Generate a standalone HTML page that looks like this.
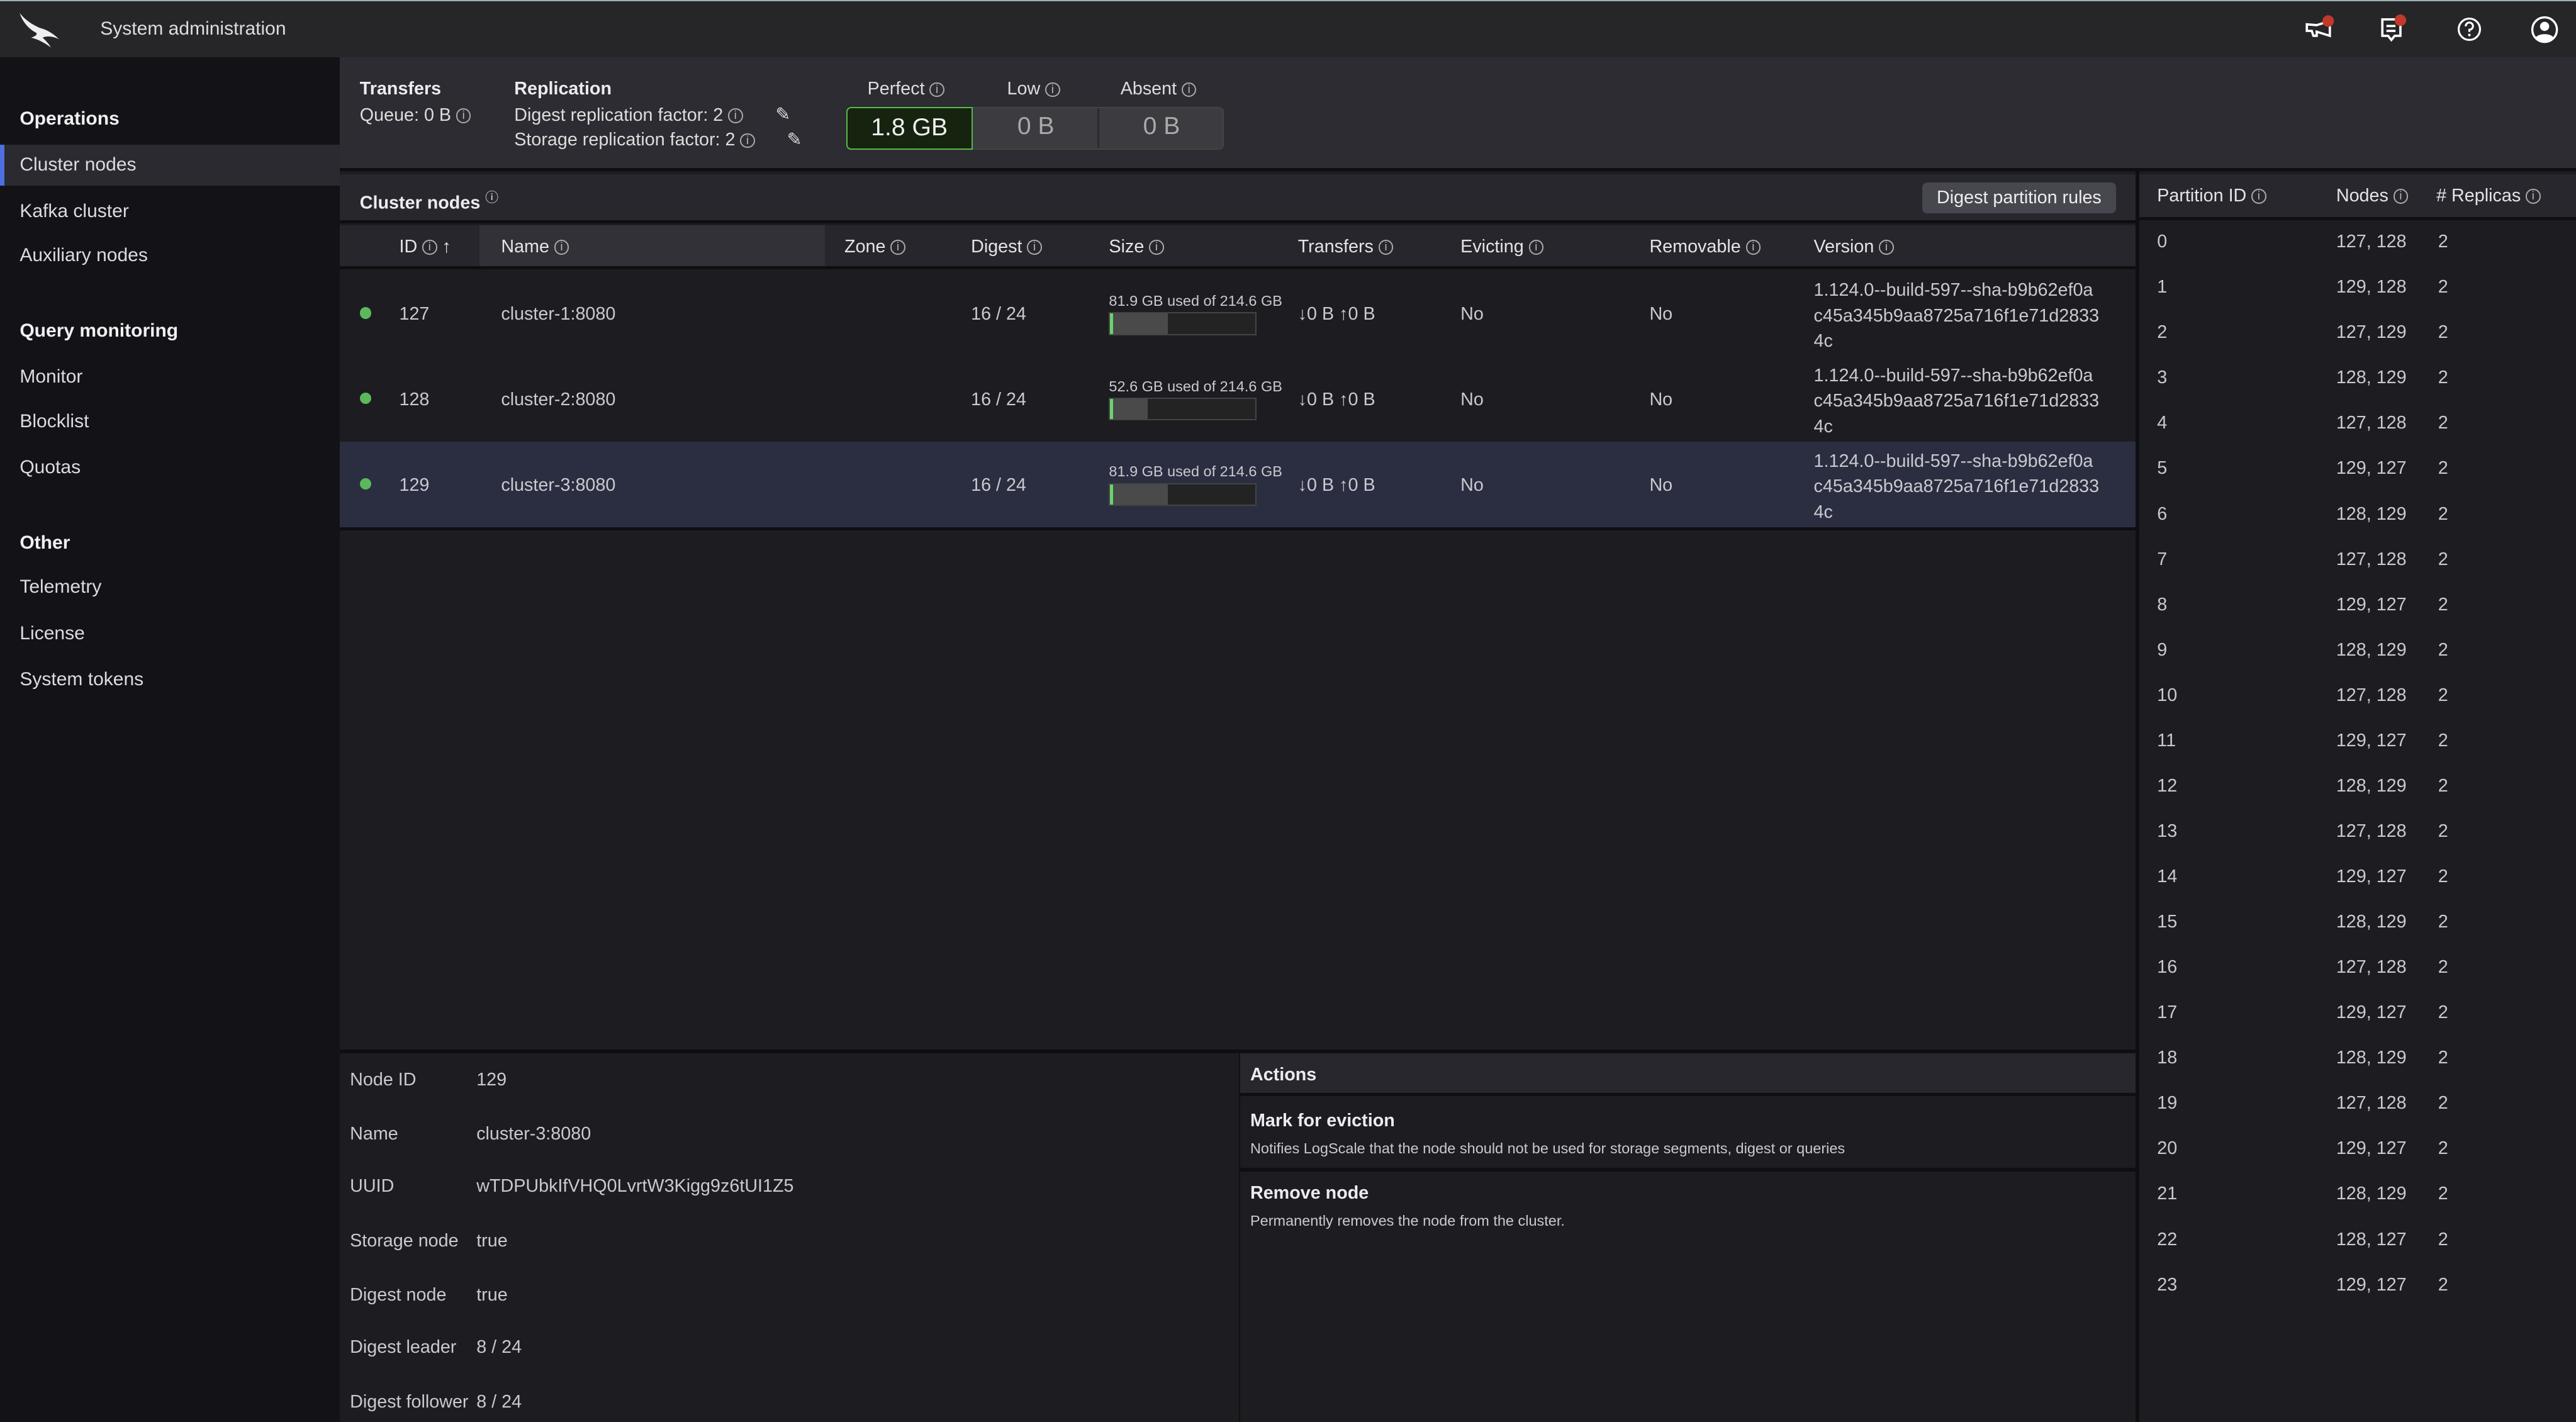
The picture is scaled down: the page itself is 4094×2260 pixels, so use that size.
<!DOCTYPE html>
<html><head><meta charset="utf-8"><style>
*{margin:0;padding:0;box-sizing:border-box}
html,body{width:4094px;height:2260px;overflow:hidden;background:#1c1c21}
#r{zoom:2.611;width:1568px;height:866px;position:relative;font-family:"Liberation Sans",sans-serif;color:#c9c9cf;font-size:11px;overflow:hidden;background:#1c1c21}
.a{position:absolute;white-space:nowrap}
.b{font-weight:bold;color:#ececf0}
.i{display:inline-block;width:9px;height:9px;border:1px solid #aaa;border-radius:50%;font-size:7px;line-height:7px;text-align:center;vertical-align:1px;margin-left:3px;color:#bbb;font-weight:normal}
.sb div{position:absolute;left:12px;font-size:11.5px;color:#dcdce0}
.sb .h{font-weight:bold;color:#f0f0f3}
.dot{position:absolute;width:7px;height:7px;border-radius:50%;background:#5cb85c;left:219px}
.bar{position:absolute;left:675px;width:90px;height:14px;background:#232323;border:1px solid #444}
.bar i{position:absolute;left:0;top:0;bottom:0;background:#4a4a4a;border-left:2px solid #6bd36b}
.pt div{position:absolute;font-size:11px;color:#c9c9cf}
</style></head><body><div id="r">
<div class="a" style="left:0;top:0;width:1568px;height:35px;background:#262628;border-top:1px solid #9ab0b4"></div>
<svg class="a" style="left:10px;top:7px" width="28" height="22" viewBox="0 0 28 22"><path d="M2 1 C6 6 10 8 14 10 C18 11 22 13 26 17 C22 15 18 15 16 16 C18 18 20 20 21 22 C17 19 13 17 9 16 C12 15 13 14 12 13 C8 11 4 7 2 1Z" fill="#eee"/></svg>
<div class="a" style="left:61px;top:11px;font-size:11.5px;color:#ddd">System administration</div>
<svg class="a" style="left:1402px;top:9px" width="22" height="18" viewBox="0 0 22 18"><path d="M2 6 L2 10 L5 10 L6 13 L8 13 L8 10.5 L16 13 L16 4 L8 6.5 Z" fill="none" stroke="#fff" stroke-width="1.4"/><circle cx="15" cy="4" r="3.5" fill="#c0392b"/></svg>
<svg class="a" style="left:1448px;top:9px" width="22" height="20" viewBox="0 0 22 20"><path d="M2 3 H13 V13 H9.5 L7.5 15.5 L5.5 13 H2 Z M4.5 7 H10 M4.5 10 H10" fill="none" stroke="#fff" stroke-width="1.4"/><circle cx="13" cy="3.5" r="3.5" fill="#c0392b"/></svg>
<svg class="a" style="left:1494px;top:9px" width="18" height="18" viewBox="0 0 18 18"><circle cx="9" cy="9" r="6.5" fill="none" stroke="#fff" stroke-width="1.2"/><path d="M6.8 7.2 A2.2 2.2 0 1 1 9 9.3 V10.6" fill="none" stroke="#fff" stroke-width="1.2"/><circle cx="9" cy="12.5" r=".8" fill="#fff"/></svg>
<svg class="a" style="left:1539px;top:8px" width="20" height="20" viewBox="0 0 20 20"><circle cx="10" cy="10" r="7.5" fill="none" stroke="#fff" stroke-width="1.3"/><circle cx="10" cy="8" r="2.8" fill="#fff"/><path d="M4.5 15 C6 12 14 12 15.5 15 C13 18 7 18 4.5 15Z" fill="#fff"/></svg>
<div class="a sb" style="left:0;top:35px;width:207px;height:831px;background:#131317">
<div class="h" style="top:31px">Operations</div>
<div style="left:0;top:53px;width:207px;height:25px;background:#2a2a30;border-left:3px solid #4f6fe0"></div>
<div style="top:59px">Cluster nodes</div>
<div style="top:87px">Kafka cluster</div>
<div style="top:114px">Auxiliary nodes</div>
<div class="h" style="top:160px">Query monitoring</div>
<div style="top:188px">Monitor</div>
<div style="top:215px">Blocklist</div>
<div style="top:243px">Quotas</div>
<div class="h" style="top:289px">Other</div>
<div style="top:316px">Telemetry</div>
<div style="top:344px">License</div>
<div style="top:372px">System tokens</div>
</div>
<div class="a" style="left:207px;top:35px;width:1361px;height:69px;background:#2c2c32;border-bottom:2px solid #0f0f12"></div>
<div class="a b" style="left:219px;top:48px">Transfers</div>
<div class="a" style="left:219px;top:64px;color:#ddd">Queue: 0 B<span class="i">i</span></div>
<div class="a b" style="left:313px;top:48px">Replication</div>
<div class="a" style="left:313px;top:64px;color:#ddd">Digest replication factor: 2<span class="i">i</span></div>
<div class="a" style="left:472px;top:63px;color:#ddd">✎</div>
<div class="a" style="left:313px;top:79px;color:#ddd">Storage replication factor: 2<span class="i">i</span></div>
<div class="a" style="left:479px;top:78px;color:#ddd">✎</div>
<div class="a" style="left:528px;top:48px;color:#ddd">Perfect<span class="i">i</span></div>
<div class="a" style="left:613px;top:48px;color:#ddd">Low<span class="i">i</span></div>
<div class="a" style="left:682px;top:48px;color:#ddd">Absent<span class="i">i</span></div>
<div class="a" style="left:515px;top:65px;width:230px;height:26px;background:#3b3b40;border:1px solid #444;border-radius:3px"></div>
<div class="a" style="left:515px;top:65px;width:77px;height:26px;background:#15230f;border:1px solid #58b84a;border-radius:3px 0 0 3px;color:#f0f0f0;font-size:15px;text-align:center;line-height:24px">1.8 GB</div>
<div class="a" style="left:668px;top:66px;width:1px;height:24px;background:#2a2a2e"></div>
<div class="a" style="left:592px;top:65px;width:77px;height:26px;color:#aaa;font-size:15px;text-align:center;line-height:24px">0 B</div>
<div class="a" style="left:669px;top:65px;width:76px;height:26px;color:#aaa;font-size:15px;text-align:center;line-height:24px">0 B</div>
<div class="a" style="left:207px;top:106px;width:1094px;height:30px;background:#27272d;border-bottom:2px solid #0f0f12"></div>
<div class="a b" style="left:219px;top:114px">Cluster nodes <sup style="font-weight:normal;font-size:8px">ⓘ</sup></div>
<div class="a" style="left:1170px;top:111px;width:118px;height:19px;background:#47474f;border-radius:3px;color:#eee;text-align:center;line-height:19px;font-size:11px">Digest partition rules</div>
<div class="a" style="left:207px;top:137px;width:1094px;height:27px;background:#26262c;border-bottom:2px solid #0f0f12"></div>
<div class="a" style="left:292px;top:137px;width:210px;height:25px;background:#313137"></div>
<div class="a" style="left:243px;top:144px;color:#e4e4e8">ID<span class="i">i</span> ↑</div>
<div class="a" style="left:305px;top:144px;color:#e4e4e8">Name<span class="i">i</span></div>
<div class="a" style="left:514px;top:144px;color:#e4e4e8">Zone<span class="i">i</span></div>
<div class="a" style="left:591px;top:144px;color:#e4e4e8">Digest<span class="i">i</span></div>
<div class="a" style="left:675px;top:144px;color:#e4e4e8">Size<span class="i">i</span></div>
<div class="a" style="left:790px;top:144px;color:#e4e4e8">Transfers<span class="i">i</span></div>
<div class="a" style="left:889px;top:144px;color:#e4e4e8">Evicting<span class="i">i</span></div>
<div class="a" style="left:1004px;top:144px;color:#e4e4e8">Removable<span class="i">i</span></div>
<div class="a" style="left:1104px;top:144px;color:#e4e4e8">Version<span class="i">i</span></div>
<div class="a" style="left:207px;top:269px;width:1094px;height:52px;background:#2a2e40"></div>
<div class="a" style="left:207px;top:321px;width:1094px;height:2px;background:#0f0f12"></div>
<div class="dot" style="top:187px"></div><div class="dot" style="top:239px"></div><div class="dot" style="top:291px"></div>
<div class="a" style="left:243px;top:185px">127</div><div class="a" style="left:243px;top:237px">128</div><div class="a" style="left:243px;top:289px">129</div>
<div class="a" style="left:305px;top:185px">cluster-1:8080</div><div class="a" style="left:305px;top:237px">cluster-2:8080</div><div class="a" style="left:305px;top:289px">cluster-3:8080</div>
<div class="a" style="left:591px;top:185px">16 / 24</div><div class="a" style="left:591px;top:237px">16 / 24</div><div class="a" style="left:591px;top:289px">16 / 24</div>
<div class="a" style="left:675px;top:178px;font-size:9px">81.9 GB used of 214.6 GB</div><div class="bar" style="top:190px"><i style="width:35px"></i></div>
<div class="a" style="left:675px;top:230px;font-size:9px">52.6 GB used of 214.6 GB</div><div class="bar" style="top:242px"><i style="width:23px"></i></div>
<div class="a" style="left:675px;top:282px;font-size:9px">81.9 GB used of 214.6 GB</div><div class="bar" style="top:294px"><i style="width:35px"></i></div>
<div class="a" style="left:790px;top:185px">↓0 B ↑0 B</div><div class="a" style="left:790px;top:237px">↓0 B ↑0 B</div><div class="a" style="left:790px;top:289px">↓0 B ↑0 B</div>
<div class="a" style="left:889px;top:185px">No</div><div class="a" style="left:889px;top:237px">No</div><div class="a" style="left:889px;top:289px">No</div>
<div class="a" style="left:1004px;top:185px">No</div><div class="a" style="left:1004px;top:237px">No</div><div class="a" style="left:1004px;top:289px">No</div>
<div class="a" style="left:1104px;top:169px;line-height:15.5px">1.124.0--build-597--sha-b9b62ef0a<br>c45a345b9aa8725a716f1e71d2833<br>4c</div>
<div class="a" style="left:1104px;top:221px;line-height:15.5px">1.124.0--build-597--sha-b9b62ef0a<br>c45a345b9aa8725a716f1e71d2833<br>4c</div>
<div class="a" style="left:1104px;top:273px;line-height:15.5px">1.124.0--build-597--sha-b9b62ef0a<br>c45a345b9aa8725a716f1e71d2833<br>4c</div>
<div class="a" style="left:207px;top:639px;width:1094px;height:2px;background:#0f0f12"></div>
<div class="a" style="left:754px;top:641px;width:1px;height:225px;background:#111"></div>
<div class="a" style="left:755px;top:641px;width:546px;height:26px;background:#27272d;border-bottom:2px solid #0f0f12"></div>
<div class="a b" style="left:761px;top:648px">Actions</div>
<div class="a b" style="left:761px;top:676px">Mark for eviction</div>
<div class="a" style="left:761px;top:694px;font-size:9px">Notifies LogScale that the node should not be used for storage segments, digest or queries</div>
<div class="a" style="left:755px;top:711px;width:546px;height:2px;background:#0f0f12"></div>
<div class="a b" style="left:761px;top:720px">Remove node</div>
<div class="a" style="left:761px;top:738px;font-size:9px">Permanently removes the node from the cluster.</div>
<div class="a" style="left:213px;top:651px">Node ID</div><div class="a" style="left:290px;top:651px">129</div>
<div class="a" style="left:213px;top:684px">Name</div><div class="a" style="left:290px;top:684px">cluster-3:8080</div>
<div class="a" style="left:213px;top:716px">UUID</div><div class="a" style="left:290px;top:716px">wTDPUbkIfVHQ0LvrtW3Kigg9z6tUI1Z5</div>
<div class="a" style="left:213px;top:749px">Storage node</div><div class="a" style="left:290px;top:749px">true</div>
<div class="a" style="left:213px;top:782px">Digest node</div><div class="a" style="left:290px;top:782px">true</div>
<div class="a" style="left:213px;top:814px">Digest leader</div><div class="a" style="left:290px;top:814px">8 / 24</div>
<div class="a" style="left:213px;top:847px">Digest follower</div><div class="a" style="left:290px;top:847px">8 / 24</div>
<div class="a" style="left:1300px;top:104px;width:2px;height:762px;background:#0f0f12"></div>
<div class="a" style="left:1302px;top:106px;width:266px;height:28px;background:#27272d;border-bottom:2px solid #0f0f12"></div>
<div class="a" style="left:1313px;top:113px;color:#e4e4e8">Partition ID<span class="i">i</span></div>
<div class="a" style="left:1422px;top:113px;color:#e4e4e8">Nodes<span class="i">i</span></div>
<div class="a" style="left:1483px;top:113px;color:#e4e4e8"># Replicas<span class="i">i</span></div>
<div class="pt" id="pt"></div>
<script>
var n=["127, 128","129, 128","127, 129","128, 129","127, 128","129, 127","128, 129","127, 128","129, 127","128, 129","127, 128","129, 127","128, 129","127, 128","129, 127","128, 129","127, 128","129, 127","128, 129","127, 128","129, 127","128, 129","128, 127","129, 127"],h="";
for(var k=0;k<24;k++){var y=141+k*27.6;h+='<div style="left:1313px;top:'+y+'px">'+k+'</div><div style="left:1422px;top:'+y+'px">'+n[k]+'</div><div style="left:1484px;top:'+y+'px">2</div>';}
document.getElementById("pt").innerHTML=h;
</script>
</div></body></html>
